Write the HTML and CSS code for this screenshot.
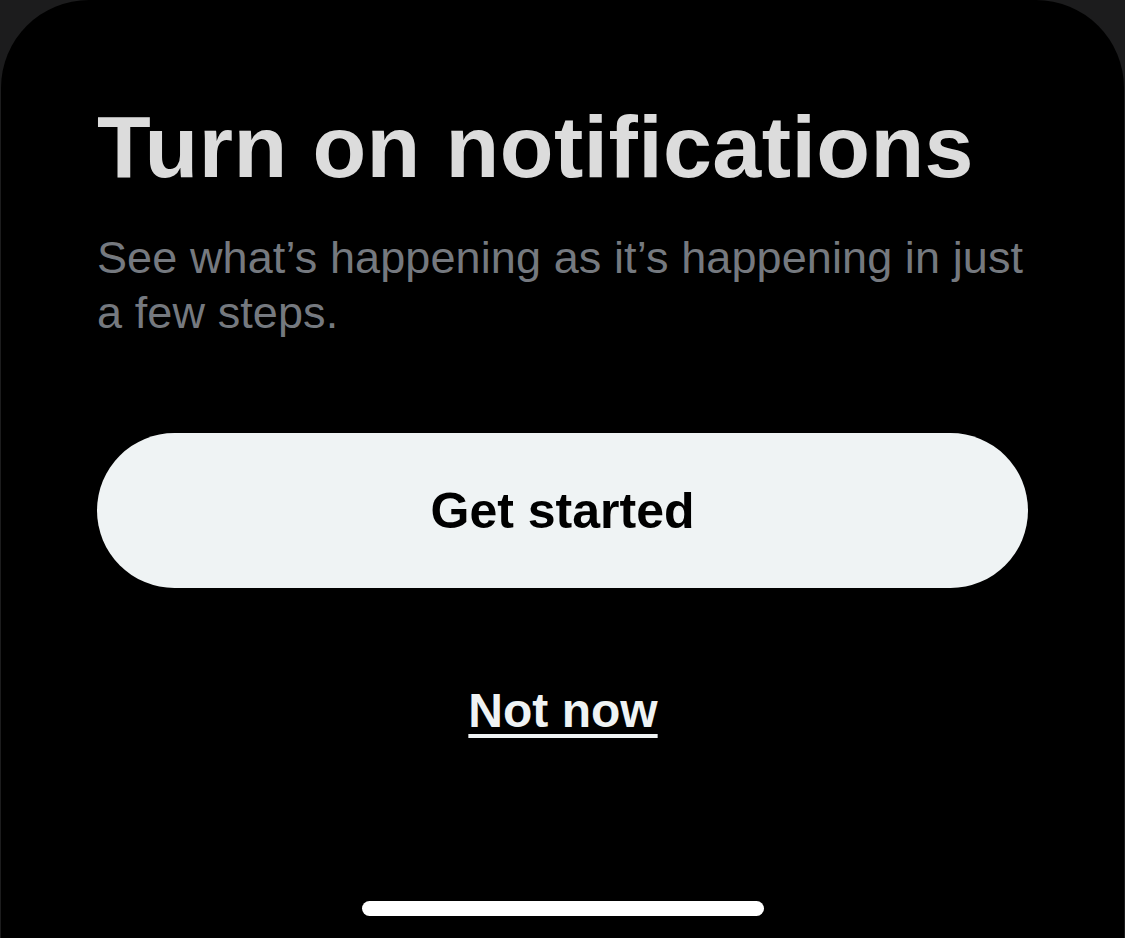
FILE: index.html
```html
<!DOCTYPE html>
<html lang="en">
<head>
<meta charset="utf-8">
<title>Turn on notifications</title>
<link rel="stylesheet" href="styles.css">
</head>
<body>
<main class="sheet">
  <h1 class="title">Turn on notifications</h1>
  <p class="subtitle">See what’s happening as it’s happening in just a few steps.</p>
  <button class="primary" type="button">Get started</button>
  <a class="secondary" href="#">Not now</a>
  <div class="home-indicator"></div>
</main>
</body>
</html>
```

FILE: styles.css
```css
html, body {
  margin: 0;
  padding: 0;
  background: #1c1c1d;
  height: 100%;
  overflow: hidden;
}

.sheet {
  box-sizing: border-box;
  margin: 0 1px;
  height: 100%;
  background: #000;
  border-radius: 88px 88px 0 0;
  padding: 97px 96px 0 96px;
  display: flex;
  flex-direction: column;
  font-family: "Liberation Sans", Arial, sans-serif;
}

.title {
  margin: 0;
  font-size: 88px;
  line-height: 100px;
  font-weight: 700;
  color: #dcdcdc;
  letter-spacing: 0.4px;
}

.subtitle {
  margin: 33px 0 0 0;
  font-size: 45px;
  line-height: 55px;
  font-weight: 400;
  color: #75797f;
  letter-spacing: 0.1px;
  max-width: 940px;
}

.primary {
  margin-top: 93px;
  width: 931px;
  height: 155px;
  flex-shrink: 0;
  border: none;
  border-radius: 78px;
  background: #eff3f4;
  color: #000;
  font-family: "Liberation Sans", Arial, sans-serif;
  font-size: 50px;
  font-weight: 700;
  display: flex;
  align-items: center;
  justify-content: center;
  padding: 0;
}

.secondary {
  margin-top: 93px;
  align-self: center;
  margin-left: 1px;
  font-size: 48px;
  line-height: 60px;
  font-weight: 700;
  color: #eff3f4;
  text-decoration: underline;
  text-decoration-thickness: 4px;
  text-underline-offset: 7px;
}

.home-indicator {
  align-self: center;
  margin-top: 160px;
  margin-left: 1px;
  width: 402px;
  height: 15px;
  flex-shrink: 0;
  border-radius: 8px;
  background: #fff;
}
```
